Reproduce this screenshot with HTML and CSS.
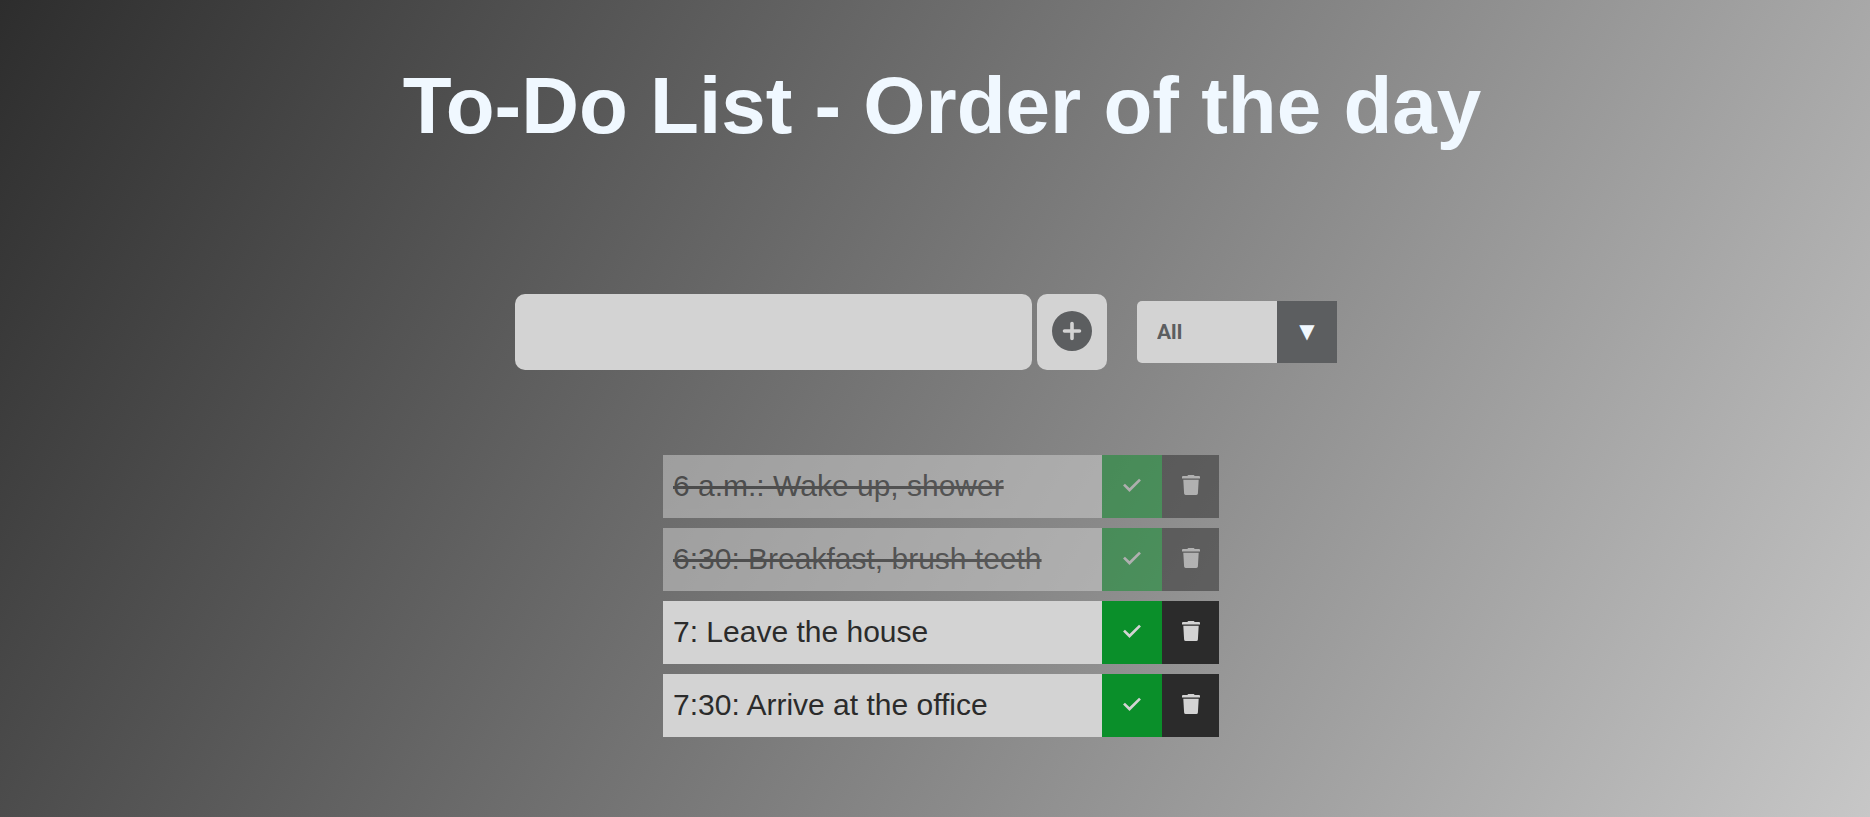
FILE: index.html
```html
<!DOCTYPE html>
<html lang="en">
<head>
<meta charset="utf-8">
<title>To-Do List</title>
<link rel="stylesheet" href="styles.css">
</head>
<body>
<svg class="sprite" aria-hidden="true">
  <symbol id="plus" viewBox="0 0 40 40"><path fill-rule="evenodd" d="M20 0a20 20 0 1 0 0 40 20 20 0 1 0 0-40zM18.200 27.500V21.800H12.500a1.800 1.800 0 0 1 0-3.600H18.200V12.500a1.800 1.800 0 0 1 3.600 0V18.200H27.500a1.800 1.800 0 0 1 0 3.600H21.800V27.500a1.800 1.800 0 0 1-3.600 0z"/></symbol>
  <symbol id="check" viewBox="0 0 18 20"><path d="M1 9.600 6.500 15 17 4.600" fill="none" stroke="currentColor" stroke-width="2.700"/></symbol>
  <symbol id="trash" viewBox="0 0 18 20"><path d="M6.500 0h5a1 1 0 0 1 1 .9H17a1 1 0 0 1 1 1V3.500H0V1.900a1 1 0 0 1 1-1H5.500a1 1 0 0 1 1-.9zM1.300 4.800H16.700L15.900 18.500a1.600 1.600 0 0 1-1.600 1.500H3.700a1.600 1.600 0 0 1-1.600-1.500z"/></symbol>
</svg>
<header class="header"><h1 class="title">To-Do List - Order of the day</h1></header>
<main>
  <form class="form">
    <input class="todo-input" type="text" aria-label="New task">
    <button class="add-button" type="button" aria-label="Add task"><svg class="icon-plus"><use href="#plus"/></svg></button>
    <div class="select">
      <select class="filter" aria-label="Filter tasks">
        <option>All</option>
        <option>Completed</option>
        <option>Uncompleted</option>
      </select>
      <span class="arrow" aria-hidden="true">▼</span>
    </div>
  </form>
  <ul class="todo-list">
    <li class="todo completed">
      <span class="todo-text">6 a.m.: Wake up, shower</span>
      <button class="complete" type="button" aria-label="Complete"><svg class="icon"><use href="#check"/></svg></button>
      <button class="remove" type="button" aria-label="Delete"><svg class="icon"><use href="#trash"/></svg></button>
    </li>
    <li class="todo completed">
      <span class="todo-text">6:30: Breakfast, brush teeth</span>
      <button class="complete" type="button" aria-label="Complete"><svg class="icon"><use href="#check"/></svg></button>
      <button class="remove" type="button" aria-label="Delete"><svg class="icon"><use href="#trash"/></svg></button>
    </li>
    <li class="todo">
      <span class="todo-text">7: Leave the house</span>
      <button class="complete" type="button" aria-label="Complete"><svg class="icon"><use href="#check"/></svg></button>
      <button class="remove" type="button" aria-label="Delete"><svg class="icon"><use href="#trash"/></svg></button>
    </li>
    <li class="todo">
      <span class="todo-text">7:30: Arrive at the office</span>
      <button class="complete" type="button" aria-label="Complete"><svg class="icon"><use href="#check"/></svg></button>
      <button class="remove" type="button" aria-label="Delete"><svg class="icon"><use href="#trash"/></svg></button>
    </li>
  </ul>
</main>
</body>
</html>
```
FILE: styles.css
```css
* {
  box-sizing: border-box;
  margin: 0;
  padding: 0;
}

body {
  min-height: 100vh;
  background: linear-gradient(120deg, #2d2d2d, #c7c7c7);
  color: #2b2b2b;
  font-family: "Liberation Sans", Arial, sans-serif;
}

.sprite {
  display: none;
}

svg {
  display: block;
  fill: currentColor;
}

button,
select,
input {
  border: none;
  font-family: inherit;
}

.header {
  padding-top: 60px;
  padding-left: 14px;
  text-align: center;
}

.title {
  color: aliceblue;
  font-size: 80px;
  line-height: 92px;
}

.form {
  display: flex;
  justify-content: center;
  align-items: center;
  margin-top: 142px;
  padding-right: 18px;
}

.todo-input {
  width: 517px;
  height: 76px;
  padding: 0 16px;
  border-radius: 10px;
  background: #d3d3d3;
  color: #5c5e60;
  font-size: 30px;
}

.add-button {
  display: grid;
  place-items: center;
  width: 70px;
  height: 76px;
  margin-left: 5px;
  padding-bottom: 2px;
  border-radius: 10px;
  background: #d3d3d3;
  color: #5c5e60;
}

.icon-plus {
  width: 40px;
  height: 40px;
}

.select {
  display: flex;
  height: 62px;
  margin-left: 30px;
  overflow: hidden;
  border-radius: 5px 0 0 5px;
}

.filter {
  width: 140px;
  padding-left: 20px;
  appearance: none;
  background: #d3d3d3;
  color: #5c5e60;
  font-family: Roboto, sans-serif;
  font-size: 21px;
  font-weight: 700;
}

.arrow {
  width: 60px;
  background: #5c5e60;
  color: aliceblue;
  font-family: "DejaVu Sans", sans-serif;
  font-size: 20px;
  line-height: 60px;
  text-align: center;
}

.todo-list {
  display: grid;
  justify-content: center;
  gap: 10px;
  margin-top: 85px;
  padding-left: 12px;
  list-style: none;
}

.todo {
  display: flex;
  height: 63px;
}

.todo-text {
  width: 439px;
  padding-left: 10px;
  background: #d3d3d3;
  font-size: 30px;
  line-height: 62px;
}

.complete,
.remove {
  display: grid;
  place-items: center;
  padding-bottom: 3px;
  color: #d3d3d3;
}

.complete {
  width: 60px;
  background: #0a8f2a;
}

.remove {
  width: 57px;
  background: #2b2b2b;
}

.icon {
  width: 18px;
  height: 20px;
}

.completed {
  opacity: 0.5;
}

.completed .todo-text {
  text-decoration: line-through;
}
```
